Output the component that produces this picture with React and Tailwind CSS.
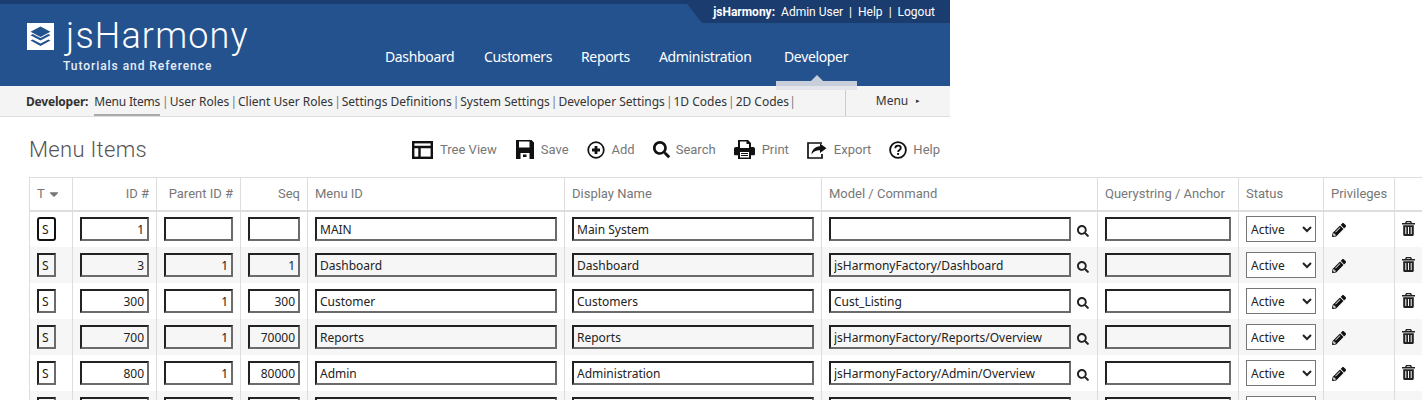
import React from 'react';
import { FaPencilAlt, FaSearch, FaCaretDown } from 'react-icons/fa';

const rows = [
  { t: 'S', id: '1', parent: '', seq: '', menu: 'MAIN', name: 'Main System', model: '' },
  { t: 'S', id: '3', parent: '1', seq: '1', menu: 'Dashboard', name: 'Dashboard', model: 'jsHarmonyFactory/Dashboard' },
  { t: 'S', id: '300', parent: '1', seq: '300', menu: 'Customer', name: 'Customers', model: 'Cust_Listing' },
  { t: 'S', id: '700', parent: '1', seq: '70000', menu: 'Reports', name: 'Reports', model: 'jsHarmonyFactory/Reports/Overview' },
  { t: 'S', id: '800', parent: '1', seq: '80000', menu: 'Admin', name: 'Administration', model: 'jsHarmonyFactory/Admin/Overview' },
  { t: 'S', id: '900', parent: '1', seq: '90000', menu: 'Dev', name: 'Developer', model: 'jsHarmonyFactory/Dev/Overview' },
];

const subLinks = ['User Roles', 'Client User Roles', 'Settings Definitions', 'System Settings', 'Developer Settings', '1D Codes', '2D Codes'];

const inputBase = 'block h-[24px] bg-transparent border-2 border-t-[#222] border-l-[#222] border-b-[#6b6b6b] border-r-[#6b6b6b] px-[3px] pt-[2px] pb-0 text-[12px] text-[#222] font-["Noto_Sans",sans-serif] outline-none';

const Field = ({ value, className }) => (
  <input readOnly value={value} className={`${inputBase} ${className}`} />
);

const LogoIcon = () => (
  <svg width="27" height="27" viewBox="0 0 27 27">
    <rect width="27" height="27" fill="#fff" />
    <path d="M13.5 3.5l10 5.2-10 5.2-10-5.2z" fill="#24528f" />
    <path d="M3.5 12.2l2.2-1.1 7.8 4 7.8-4 2.2 1.1-10 5.3z" fill="#24528f" />
    <path d="M3.5 17.6l2.2-1.1 7.8 4 7.8-4 2.2 1.1-10 5.3z" fill="#24528f" />
  </svg>
);

const TreeIcon = () => (
  <svg width="21" height="18" viewBox="0 0 21 18" fill="none" stroke="#111" strokeWidth="2.4">
    <rect x="1.2" y="1.2" width="18.6" height="15.6" />
    <path d="M1 6h19M7.5 6v11" />
  </svg>
);

const SaveIcon = () => (
  <svg width="18" height="19" viewBox="0 0 18 19">
    <path fillRule="evenodd" d="M0 0h15.5L18 2.5V19H0zM3 1.5v6h10.5v-6zM4.5 13v6h9v-6zM7 14.5h3.5v2.5H7z" fill="#111" />
  </svg>
);

const AddIcon = () => (
  <svg width="18" height="18" viewBox="0 0 18 18">
    <circle cx="9" cy="9" r="7.8" fill="none" stroke="#111" strokeWidth="1.7" />
    <path d="M9 5v8M5 9h8" stroke="#111" strokeWidth="2.8" />
  </svg>
);

const PrintIcon = () => (
  <svg width="21" height="19" viewBox="0 0 21 19">
    <path fillRule="evenodd" d="M4 0h10l3 3v4h2c1.2 0 2 .8 2 2v5c0 .8-.6 1.300-1.300 1.300H17V19H4v-3.700H1.300C.6 15.300 0 14.800 0 14V9c0-1.200.8-2 2-2h2zM6 1.600V8h9V4h-2.500V1.600zM6 12v5.400h9V12z" fill="#111" />
    <path d="M7 13.500h7M7 15.500h7" stroke="#111" strokeWidth="1" />
  </svg>
);

const ExportIcon = () => (
  <svg width="20" height="18" viewBox="0 0 20 18">
    <path d="M15 2H1v15h14v-4" fill="none" stroke="#111" strokeWidth="1.7" />
    <path d="M13 2.500l6.500 4.800-6.500 4.700V9.300C9.500 9.200 6.500 10.200 4.500 13.500 4.800 9 8 5.600 13 5.300z" fill="#111" />
  </svg>
);

const SearchIcon = () => <FaSearch size={17} color="#111" />;

const HelpIcon = () => (
  <svg width="18" height="18" viewBox="0 0 18 18">
    <circle cx="9" cy="9" r="7.900" fill="none" stroke="#111" strokeWidth="1.800" />
    <path d="M6.300 7.200c0-1.600 1.200-2.500 2.800-2.500s2.700.9 2.700 2.300c0 2-2.700 2-2.700 3.900" fill="none" stroke="#111" strokeWidth="1.800" />
    <rect x="8.100" y="12" width="1.900" height="1.900" fill="#111" />
  </svg>
);

const TrashIcon = () => (
  <svg width="13" height="15" viewBox="0 0 13 15">
    <path fillRule="evenodd" d="M4 0h5l1 2h3v1.500H0V2h3zM5 1.200L4.600 2h3.800L8 1.200z" fill="#222" />
    <path fillRule="evenodd" d="M1.200 4.300h10.600V13.500c0 .8-.6 1.500-1.400 1.500H2.600c-.8 0-1.400-.7-1.400-1.500zM3.300 6v7h1V6zM6 6v7h1V6zM8.700 6v7h1V6z" fill="#222" />
  </svg>
);

const tools = [
  { label: 'Tree View', icon: <TreeIcon />, cls: 'gap-[7px] mr-[19px]' },
  { label: 'Save', icon: <SaveIcon />, cls: 'gap-[7px] mr-[18px]' },
  { label: 'Add', icon: <AddIcon />, cls: 'gap-[7px] mr-[18px]' },
  { label: 'Search', icon: <SearchIcon />, cls: 'gap-[6px] mr-[18px]' },
  { label: 'Print', icon: <PrintIcon />, cls: 'gap-[7px] mr-[18px]' },
  { label: 'Export', icon: <ExportIcon />, cls: 'gap-[7px] mr-[18px]' },
  { label: 'Help', icon: <HelpIcon />, cls: 'gap-[6px]' },
];

const cols = ['w-[43px]', 'w-[84px]', 'w-[84px]', 'w-[67px]', 'w-[257px]', 'w-[257px]', 'w-[276px]', 'w-[141px]', 'w-[85px]', 'w-[71px]', 'w-[28px]'];

const thClass = 'border-[1px] border-[#ddd] border-b-[2px] h-[33px] px-[7px] font-normal text-[13px] text-[#777]';
const tdClass = 'border-x-[1px] border-[#ddd] h-[36px] px-[7px] align-middle [tr:first-child_&]:pb-[1px]';

export default function App() {
  return (
    <div className="w-[1422px] h-[400px] overflow-hidden bg-white font-['Roboto',sans-serif]">
      {/* header */}
      <div className="w-[950px] h-[86px] bg-[#24528f] relative">
        <div className="h-[4px] bg-[#1b3c6e]" />
        <div className="absolute right-0 top-0 h-[23px] w-[266px] bg-[#1b3c6e] [clip-path:polygon(0_0,100%_0,100%_100%,18px_100%)] flex items-center justify-end pr-[15px] text-[12px] text-white">
          <span className="font-bold mr-[6px]">jsHarmony:</span>
          <span>Admin User</span>
          <span className="mx-[6px]">|</span>
          <span>Help</span>
          <span className="mx-[6px]">|</span>
          <span>Logout</span>
        </div>
        <div className="flex">
          <div className="pl-[27px] pt-[14px] w-[385px]">
            <div className="flex items-center h-[36px]">
              <LogoIcon />
              <span className="ml-[12px] text-[36px] leading-none font-light tracking-[1.15px] text-white">jsHarmony</span>
            </div>
            <div className="ml-[36px] mt-[3px] text-[12px] font-medium tracking-[0.95px] text-[#e8edf5]">Tutorials and Reference</div>
          </div>
          <nav className="flex pt-[42px] text-[14px] tracking-[-0.35px] text-white font-['Noto_Sans',sans-serif]">
            <span className="w-[99px]">Dashboard</span>
            <span className="w-[97px]">Customers</span>
            <span className="w-[78px]">Reports</span>
            <span className="w-[125px]">Administration</span>
            <span>Developer</span>
          </nav>
        </div>
        {/* active tab marker */}
        <div className="absolute left-[776px] top-[81px] w-[81px] h-[5px] bg-[#c9cedb]" />
        <div className="absolute left-[776px] top-[86px] w-[81px] h-[4px] bg-[#e4e5ea]" />
        <div className="absolute left-[811px] top-[75px] w-0 h-0 border-x-[6px] border-x-transparent border-b-[6px] border-b-[#c9cedb]" />
      </div>
      {/* sub nav */}
      <div className="w-[950px] h-[31px] bg-[#f4f4f4] border-b-[1px] border-[#ddd] flex text-[12px] text-[#333] font-['Noto_Sans',sans-serif]">
        <div className="flex-1 flex items-center pl-[26px]">
          <span className="font-bold tracking-[-0.2px] mr-[6px] mt-[1px]">Developer:</span>
          <span className="border-b-[2px] border-[#aaa] h-[28px] leading-[27px] mt-[1px] tracking-[-0.2px] mr-[1px]">Menu Items</span>
          {subLinks.map((l) => (
            <span key={l} className="whitespace-pre mt-[1px]"><span className="text-[#777] mx-[1px]">|</span>{l}</span>
          ))}
          <span className="text-[#777] mt-[1px]">|</span>
        </div>
        <div className="w-[105px] border-l-[1px] border-[#ccc] flex items-center justify-center gap-[8px]">
          <span>Menu</span>
          <span className="text-[7px]">▸</span>
        </div>
      </div>
      {/* title and toolbar */}
      <div className="w-[950px] h-[60px] flex items-center pl-[29px] pr-[10px] pt-[5px]">
        <h1 className="text-[22px] font-light text-[#555] tracking-[0.3px]">Menu Items</h1>
        <div className="ml-auto flex items-center text-[13px] text-[#777]">
          {tools.map((t) => (
            <div key={t.label} className={`flex items-center ${t.cls}`}>
              {t.icon}
              <span>{t.label}</span>
            </div>
          ))}
        </div>
      </div>
      {/* grid */}
      <table className="ml-[29px] border-collapse table-fixed w-[1393px]">
        <colgroup>
          {cols.map((c, i) => <col key={i} className={c} />)}
        </colgroup>
        <thead>
          <tr>
            <th className={`${thClass} text-left whitespace-nowrap`}>T<FaCaretDown className="inline ml-[2px] mb-[1px]" size={14} color="#777" /></th>
            <th className={`${thClass} text-right`}>ID #</th>
            <th className={`${thClass} text-right`}>Parent ID #</th>
            <th className={`${thClass} text-right`}>Seq</th>
            <th className={`${thClass} text-left`}>Menu ID</th>
            <th className={`${thClass} text-left`}>Display Name</th>
            <th className={`${thClass} text-left`}>Model / Command</th>
            <th className={`${thClass} text-left`}>Querystring / Anchor</th>
            <th className={`${thClass} text-left`}>Status</th>
            <th className={`${thClass} text-left`}>Privileges</th>
            <th className={thClass}></th>
          </tr>
        </thead>
        <tbody>
          {rows.map((r, i) => (
            <tr key={r.id} className={i % 2 === 1 ? 'bg-[#f6f6f6]' : 'bg-white'}>
              <td className={tdClass}>
                <Field value={r.t} className={`w-[19px] ${i === 0 ? 'rounded-[3px] !border-[#111]' : ''}`} />
              </td>
              <td className={tdClass}><Field value={r.id} className="w-[69px] text-right" /></td>
              <td className={tdClass}><Field value={r.parent} className="w-[69px] text-right" /></td>
              <td className={tdClass}><Field value={r.seq} className="w-[52px] text-right" /></td>
              <td className={tdClass}><Field value={r.menu} className="w-[242px]" /></td>
              <td className={tdClass}><Field value={r.name} className="w-[242px]" /></td>
              <td className={tdClass}>
                <div className="flex items-center">
                  <Field value={r.model} className="w-[242px]" />
                  <FaSearch size={12} color="#222" className="ml-[6px] mt-[4px]" />
                </div>
              </td>
              <td className={tdClass}><Field value="" className="w-[126px]" /></td>
              <td className={tdClass}>
                <select defaultValue="Active" className="block w-[70px] h-[26px] bg-white border-[1px] border-[#767676] pl-0 pt-[1px] text-[12px] text-[#222] font-['Noto_Sans',sans-serif]">
                  <option>Active</option>
                </select>
              </td>
              <td className={tdClass}><FaPencilAlt size={14} color="#111" className="ml-[1px] mt-[3px]" /></td>
              <td className={`${tdClass} !px-[7px]`}><TrashIcon /></td>
            </tr>
          ))}
        </tbody>
      </table>
    </div>
  );
}
